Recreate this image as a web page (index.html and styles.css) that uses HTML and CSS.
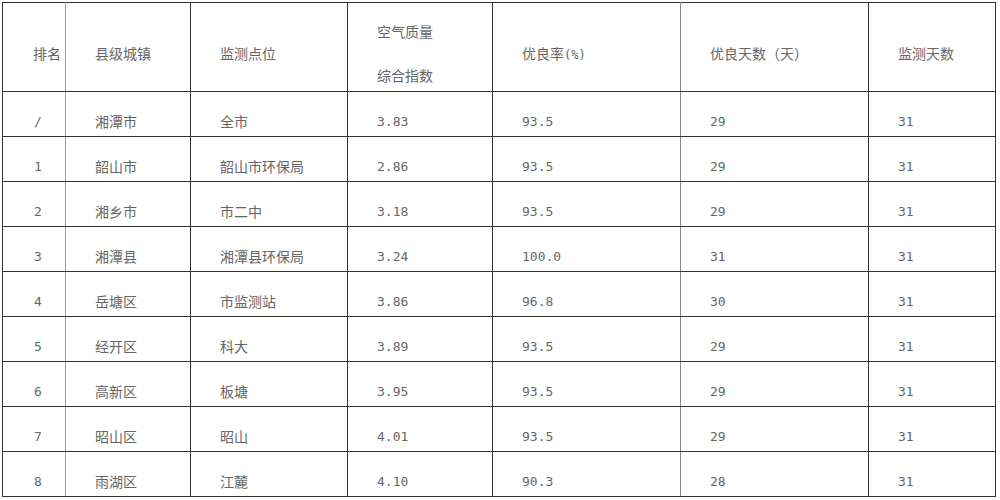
FILE: index.html
```html
<!DOCTYPE html>
<html lang="zh-CN">
<head>
<meta charset="utf-8">
<title>空气质量排名</title>
<link rel="stylesheet" href="styles.css">
</head>
<body>
<table class="aq">
  <colgroup>
    <col class="c1"><col class="c2"><col class="c3"><col class="c4"><col class="c5"><col class="c6"><col class="c7">
  </colgroup>
  <thead>
    <tr>
      <th class="b-l2">排名</th>
      <th>县级城镇</th>
      <th>监测点位</th>
      <th class="two"><span class="ln ln1">空气质量</span><span class="ln">综合指数</span></th>
      <th class="b-r5">优良率<span class="pct">(%)</span></th>
      <th>优良天数（天）</th>
      <th>监测天数</th>
    </tr>
  </thead>
  <tbody>
    <tr><td class="b-l2 num">/</td><td>湘潭市</td><td>全市</td><td class="num">3.83</td><td class="num b-r5">93.5</td><td class="num">29</td><td class="num">31</td></tr>
    <tr><td class="b-l2 num">1</td><td>韶山市</td><td>韶山市环保局</td><td class="num">2.86</td><td class="num b-r5">93.5</td><td class="num">29</td><td class="num">31</td></tr>
    <tr><td class="b-l2 num">2</td><td>湘乡市</td><td>市二中</td><td class="num">3.18</td><td class="num b-r5">93.5</td><td class="num">29</td><td class="num">31</td></tr>
    <tr><td class="b-l2 num">3</td><td>湘潭县</td><td>湘潭县环保局</td><td class="num">3.24</td><td class="num b-r5">100.0</td><td class="num">31</td><td class="num">31</td></tr>
    <tr><td class="b-l2 num">4</td><td>岳塘区</td><td>市监测站</td><td class="num">3.86</td><td class="num b-r5">96.8</td><td class="num">30</td><td class="num">31</td></tr>
    <tr><td class="b-l2 num">5</td><td>经开区</td><td>科大</td><td class="num">3.89</td><td class="num b-r5">93.5</td><td class="num">29</td><td class="num">31</td></tr>
    <tr><td class="b-l2 num">6</td><td>高新区</td><td>板塘</td><td class="num">3.95</td><td class="num b-r5">93.5</td><td class="num">29</td><td class="num">31</td></tr>
    <tr><td class="b-l2 num">7</td><td>昭山区</td><td>昭山</td><td class="num">4.01</td><td class="num b-r5">93.5</td><td class="num">29</td><td class="num">31</td></tr>
    <tr><td class="b-l2 num">8</td><td>雨湖区</td><td>江麓</td><td class="num">4.10</td><td class="num b-r5">90.3</td><td class="num">28</td><td class="num">31</td></tr>
  </tbody>
</table>
</body>
</html>
```
FILE: styles.css
```css
html, body {
  margin: 0;
  padding: 0;
  background: #ffffff;
}

body {
  padding: 2px 0 0 2px;
}

.aq {
  border-collapse: collapse;
  table-layout: fixed;
  width: 993px;
  font-family: "Noto Sans CJK SC", "Noto Sans", sans-serif;
  font-size: 14px;
  color: #666666;
  border-top: 1px solid #7a7a7a;
  border-left: 1px solid #3a3a3a;
  border-right: 1px solid #3a3a3a;
  border-bottom: 1px solid #3a3a3a;
}

.c1 { width: 63px; }
.c2 { width: 125px; }
.c3 { width: 157px; }
.c4 { width: 145px; }
.c5 { width: 188px; }
.c6 { width: 188px; }
.c7 { width: 127px; }

.aq th,
.aq td {
  border: 1px solid #333333;
  text-align: left;
  vertical-align: top;
  padding: 0 0 0 29px;
  font-weight: 400;
  line-height: 16px;
  white-space: nowrap;
}

.aq thead tr { height: 89px; }
.aq tbody tr { height: 45px; }

.aq th {
  padding-top: 42px;
}

.aq th.two {
  padding-top: 20px;
}

.ln {
  display: block;
}

.ln1 {
  margin-bottom: 28px;
}

.pct {
  font-family: "DejaVu Sans Mono", monospace;
  font-size: 12px;
}

.aq td {
  padding-top: 21px;
}

.aq .num {
  font-family: "DejaVu Sans Mono", "Noto Sans CJK SC", monospace;
  font-size: 13px;
  padding-top: 22px;
}

.aq .b-l2 { border-right-color: #9a9a9a; }
.aq .b-r5 { border-right-color: #8a8a8a; }
.aq th.b-l2, .aq td.b-l2 { padding-left: 30px; }
.aq td.b-l2 { padding-left: 31px; }
```
